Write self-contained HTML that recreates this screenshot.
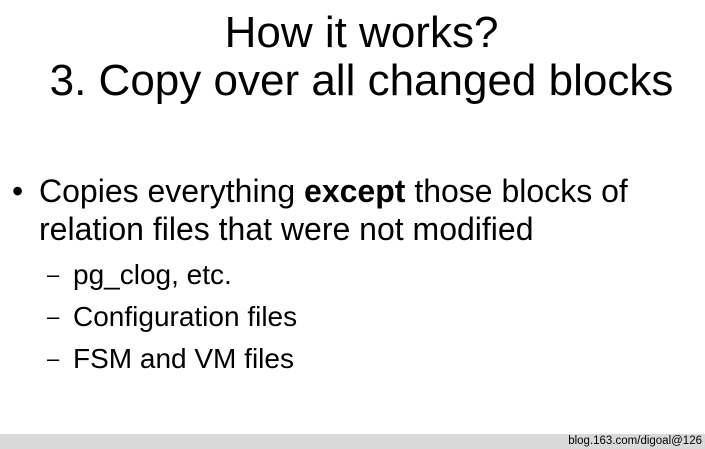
<!DOCTYPE html>
<html><head><style>
html,body{margin:0;padding:0;width:705px;height:449px;background:#fff;overflow:hidden;font-family:"Liberation Sans",sans-serif;color:#000;position:relative}
.t{position:absolute;left:0;width:723px;text-align:center;font-size:44px;line-height:48px;top:9px}
.b{position:absolute;font-size:32px;line-height:38px;white-space:nowrap}
.s{position:absolute;font-size:28px;white-space:nowrap}
.d{position:absolute;font-size:22px;white-space:nowrap}
.foot{position:absolute;left:0;top:434px;width:705px;height:15px;background:#d9d9d9}
.foot span{position:absolute;right:3px;top:0;font-size:11.5px;line-height:15px}
</style></head><body>
<div class="t">How it works?<br>3. Copy over all changed blocks</div>
<div class="b" style="left:12px;top:172px">•</div>
<div class="b" style="left:39px;top:172px">Copies everything <b>except</b> those blocks of<br>relation files that were not modified</div>
<div class="d" style="left:47px;top:262px">–</div><div class="s" style="left:73px;top:259px">pg_clog, etc.</div>
<div class="d" style="left:47px;top:304px">–</div><div class="s" style="left:73px;top:301px">Configuration files</div>
<div class="d" style="left:47px;top:346px">–</div><div class="s" style="left:73px;top:343px">FSM and VM files</div>
<div class="foot"><span>blog.163.com/digoal@126</span></div>
</body></html>
